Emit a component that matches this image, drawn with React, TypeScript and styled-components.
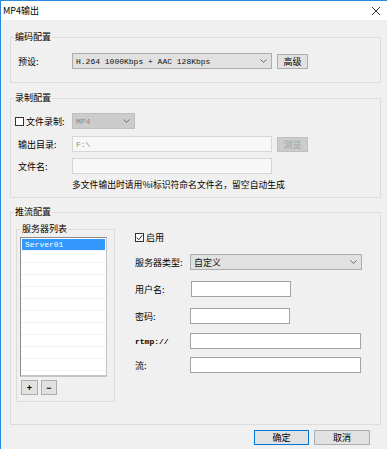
import React from "react";
import styled, { createGlobalStyle } from "styled-components";

const Global = createGlobalStyle`
  html, body { margin: 0; padding: 0; background: #f0f0f0; }
  body { font-family: "Noto Sans CJK SC", "Noto Sans", sans-serif; font-size: 9px; color: #000; }
  * { box-sizing: border-box; }
`;

const Win = styled.div`
  width: 387px;
  height: 449px;
  border-top: 1px solid #2b8ad9;
  border-left: 1px solid #2b8ad9;
  display: flex;
  flex-direction: column;
  background: #f0f0f0;
  overflow: hidden;
`;

const TitleBar = styled.div`
  height: 19px;
  background: #fff;
  display: flex;
  align-items: center;
  justify-content: space-between;
  padding: 0 6px 0 2px;
  font-size: 9px;
  color: #000;
  flex-shrink: 0;
`;

const Content = styled.div`
  flex: 1;
  display: flex;
  flex-direction: column;
  padding: 17px 6px 0 9px;
`;

const Group = styled.div<{ $h: number; $mt?: number; $pt: number; $pl: number }>`
  position: relative;
  border: 1px solid #dcdcdc;
  height: ${(p) => p.$h}px;
  margin-top: ${(p) => p.$mt ?? 0}px;
  padding-top: ${(p) => p.$pt}px;
  padding-left: ${(p) => p.$pl}px;
  display: flex;
  flex-direction: column;
  flex-shrink: 0;
`;

const Legend = styled.span<{ $left: number }>`
  position: absolute;
  top: -7px;
  left: ${(p) => p.$left}px;
  padding: 0 1px;
  background: #f0f0f0;
  font-size: 9px;
  line-height: 12px;
  white-space: nowrap;
`;

const Row = styled.div<{ $mt?: number; $h?: number }>`
  display: flex;
  align-items: center;
  margin-top: ${(p) => p.$mt ?? 0}px;
  height: ${(p) => p.$h ?? 16}px;
`;

const Label = styled.span<{ $w: number; $pl?: number }>`
  width: ${(p) => p.$w}px;
  padding-left: ${(p) => p.$pl ?? 0}px;
  flex-shrink: 0;
  white-space: nowrap;
  font-size: 9px;
`;

const Combo = styled.div<{ $w: number; $disabled?: boolean; $mono?: boolean }>`
  width: ${(p) => p.$w}px;
  height: 16px;
  background: ${(p) => (p.$disabled ? "#cccccc" : "#e1e1e1")};
  border: 1px solid ${(p) => (p.$disabled ? "#bfbfbf" : "#adadad")};
  color: ${(p) => (p.$disabled ? "#8a8a8a" : "#111")};
  display: flex;
  align-items: center;
  justify-content: space-between;
  padding: 0 4px 0 3px;
  font-family: ${(p) => (p.$mono ? '"Liberation Mono", monospace' : '"Noto Sans CJK SC", sans-serif')};
  font-size: ${(p) => (p.$mono ? "8px" : "9px")};
  white-space: nowrap;
  flex-shrink: 0;
`;

const Btn = styled.div<{ $w: number; $disabled?: boolean; $focus?: boolean }>`
  width: ${(p) => p.$w}px;
  height: 15px;
  background: ${(p) => (p.$disabled ? "#cccccc" : "#e1e1e1")};
  border: 1px solid ${(p) => (p.$focus ? "#0078d7" : p.$disabled ? "#bfbfbf" : "#adadad")};
  color: ${(p) => (p.$disabled ? "#a0a0a0" : "#000")};
  display: flex;
  align-items: center;
  justify-content: center;
  font-size: 9px;
  flex-shrink: 0;
`;

const Input = styled.div<{ $w: number; $disabled?: boolean }>`
  width: ${(p) => p.$w}px;
  height: 16px;
  background: ${(p) => (p.$disabled ? "#f7f7f7" : "#fff")};
  border: 1px solid ${(p) => (p.$disabled ? "#d6d6d6" : "#a3a3a3")};
  color: #8a8a8a;
  display: flex;
  align-items: center;
  padding-left: 3px;
  font-family: "Liberation Mono", monospace;
  font-size: 8px;
  flex-shrink: 0;
`;

const Box = styled.span`
  width: 9px;
  height: 9px;
  border: 1px solid #333;
  background: #fff;
  display: inline-flex;
  align-items: center;
  justify-content: center;
  margin-right: 2px;
  flex-shrink: 0;
`;

const CheckLabel = styled.span<{ $w?: number }>`
  display: flex;
  align-items: center;
  width: ${(p) => (p.$w ? `${p.$w}px` : "auto")};
  flex-shrink: 0;
  font-size: 9px;
  white-space: nowrap;
`;

const Hint = styled.div`
  margin-top: 5px;
  margin-left: 57px;
  font-size: 8.8px;
  line-height: 12px;
  white-space: nowrap;
`;

const StreamBody = styled.div`
  display: flex;
  align-items: flex-start;
`;

const InnerGroup = styled.div`
  position: relative;
  width: 99px;
  height: 173px;
  border: 1px solid #dcdcdc;
  padding: 7px 0 0 3px;
  flex-shrink: 0;
  display: flex;
  flex-direction: column;
`;

const ListBox = styled.div`
  width: 87px;
  height: 140px;
  border: 1px solid #8c8c8c;
  border-right-color: #c4c4c4;
  border-bottom: 2px solid #c4c4c4;
  background-color: #fff;
  background-image: repeating-linear-gradient(
    to bottom,
    transparent 0px,
    transparent 11px,
    #f2f2f2 11px,
    #f2f2f2 12px
  );
  background-position: 0 1px;
  padding: 1px;
`;

const ListItem = styled.div<{ $selected?: boolean }>`
  height: 11px;
  background: ${(p) => (p.$selected ? "#3399ff" : "transparent")};
  color: ${(p) => (p.$selected ? "#fff" : "#000")};
  font-family: "Liberation Mono", monospace;
  font-size: 8px;
  line-height: 11px;
  padding-left: 3px;
`;

const SmallBtns = styled.div`
  display: flex;
  gap: 3px;
  margin: 3px 0 0 1px;
`;

const SmallBtn = styled.div<{ $w: number }>`
  width: ${(p) => p.$w}px;
  height: 15px;
  background: #e1e1e1;
  border: 1px solid #adadad;
  display: flex;
  align-items: center;
  justify-content: center;
  font-family: "Liberation Sans", sans-serif;
  font-size: 9px;
  font-weight: bold;
`;

const RightCol = styled.div`
  margin-left: 20px;
  margin-top: 2px;
  display: flex;
  flex-direction: column;
`;

const MonoLabel = styled(Label)`
  font-family: "Liberation Mono", monospace;
  font-size: 8px;
  font-weight: bold;
`;

const Footer = styled.div`
  display: flex;
  justify-content: flex-end;
  gap: 5px;
  margin-top: 5px;
  padding-right: 11px;
`;

const Chevron = () => (
  <svg width="7" height="4" viewBox="0 0 7 4">
    <path d="M0.5 0.5 L3.5 3.3 L6.5 0.5" fill="none" stroke="#606060" strokeWidth="0.9" />
  </svg>
);

const Close = () => (
  <svg width="10" height="10" viewBox="0 0 10 10">
    <path d="M1 1 L9 9 M9 1 L1 9" stroke="#333" strokeWidth="1" />
  </svg>
);

const Tick = () => (
  <svg width="7" height="7" viewBox="0 0 7 7">
    <path d="M0.8 3.6 L2.8 5.6 L6.4 1.2" fill="none" stroke="#222" strokeWidth="1" />
  </svg>
);

export default function App() {
  return (
    <>
      <Global />
      <Win>
        <TitleBar>
          <span>MP4输出</span>
          <Close />
        </TitleBar>
        <Content>
          <Group $h={46} $pt={15} $pl={7}>
            <Legend $left={3}>编码配置</Legend>
            <Row>
              <Label $w={54}>预设:</Label>
              <Combo $w={200} $mono>
                <span>H.264 1000Kbps + AAC 128Kbps</span>
                <Chevron />
              </Combo>
              <Btn $w={31} style={{ marginLeft: 5 }}>高级</Btn>
            </Row>
          </Group>

          <Group $h={100} $mt={15} $pt={14} $pl={4}>
            <Legend $left={3}>录制配置</Legend>
            <Row>
              <CheckLabel $w={57}>
                <Box />
                文件录制:
              </CheckLabel>
              <Combo $w={63} $disabled $mono>
                <span>MP4</span>
                <Chevron />
              </Combo>
            </Row>
            <Row $mt={7}>
              <Label $w={57} $pl={3}>输出目录:</Label>
              <Input $w={200} $disabled>F:\</Input>
              <Btn $w={31} $disabled style={{ marginLeft: 5 }}>浏览</Btn>
            </Row>
            <Row $mt={6}>
              <Label $w={57} $pl={3}>文件名:</Label>
              <Input $w={200} $disabled />
            </Row>
            <Hint>多文件输出时请用%i标识符命名文件名，留空自动生成</Hint>
          </Group>

          <Group $h={213} $mt={14} $pt={16} $pl={5}>
            <Legend $left={3}>推流配置</Legend>
            <StreamBody>
              <InnerGroup>
                <Legend $left={4}>服务器列表</Legend>
                <ListBox>
                  <ListItem $selected>Server01</ListItem>
                </ListBox>
                <SmallBtns>
                  <SmallBtn $w={17}>+</SmallBtn>
                  <SmallBtn $w={16}>−</SmallBtn>
                </SmallBtns>
              </InnerGroup>
              <RightCol>
                <Row $h={12}>
                  <CheckLabel>
                    <Box>
                      <Tick />
                    </Box>
                    启用
                  </CheckLabel>
                </Row>
                <Row $mt={11}>
                  <Label $w={55}>服务器类型:</Label>
                  <Combo $w={172}>
                    <span>自定义</span>
                    <Chevron />
                  </Combo>
                </Row>
                <Row $mt={11}>
                  <Label $w={56}>用户名:</Label>
                  <Input $w={100} />
                </Row>
                <Row $mt={11}>
                  <Label $w={55}>密码:</Label>
                  <Input $w={100} />
                </Row>
                <Row $mt={9}>
                  <MonoLabel $w={55}>rtmp://</MonoLabel>
                  <Input $w={171} />
                </Row>
                <Row $mt={8}>
                  <Label $w={55}>流:</Label>
                  <Input $w={171} />
                </Row>
              </RightCol>
            </StreamBody>
          </Group>

          <Footer>
            <Btn $w={55} $focus>确定</Btn>
            <Btn $w={56}>取消</Btn>
          </Footer>
        </Content>
      </Win>
    </>
  );
}
